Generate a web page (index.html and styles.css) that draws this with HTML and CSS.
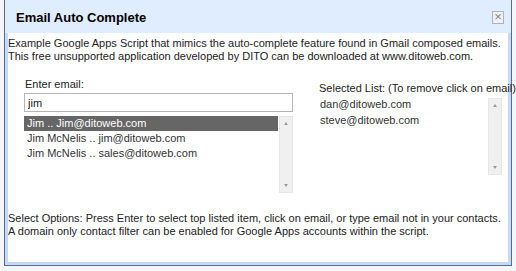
FILE: index.html
```html
<!DOCTYPE html>
<html lang="en">
<head>
  <meta charset="UTF-8" />
  <title>Email Auto Complete</title>
  <link rel="stylesheet" href="styles.css">
</head>
<body>
  <div class="dialog">
    <div class="dialog-header">
      <div class="dialog-title">Email Auto Complete</div>
      <div class="close-btn">&#215;</div>
    </div>
    <div class="dialog-body">
      <p class="intro">Example Google Apps Script that mimics the auto-complete feature found in Gmail composed emails.<br>This free unsupported application developed by DITO can be downloaded at www.ditoweb.com.</p>

      <div class="columns">
        <div class="col-left">
          <div class="label">Enter email:</div>
          <input class="email-input" type="text" value="jim" />
          <div class="listbox listbox-left">
            <div class="list-items">
              <div class="item selected">Jim .. Jim@ditoweb.com</div>
              <div class="item">Jim McNelis .. jim@ditoweb.com</div>
              <div class="item">Jim McNelis .. sales@ditoweb.com</div>
            </div>
            <div class="scrollbar">
              <span class="arrow up"></span>
              <span class="arrow down"></span>
            </div>
          </div>
        </div>

        <div class="col-right">
          <div class="label">Selected List: (To remove click on email)</div>
          <div class="listbox listbox-right">
            <div class="list-items">
              <div class="item">dan@ditoweb.com</div>
              <div class="item">steve@ditoweb.com</div>
            </div>
            <div class="scrollbar">
              <span class="arrow up"></span>
              <span class="arrow down"></span>
            </div>
          </div>
        </div>
      </div>

      <p class="options">Select Options: Press Enter to select top listed item, click on email, or type email not in your contacts.<br>A domain only contact filter can be enabled for Google Apps accounts within the script.</p>
    </div>
  </div>
</body>
</html>
```

FILE: styles.css
```css
body {
  margin: 0;
  font-family: 'Liberation Sans', Arial, sans-serif;
  font-size: 11px;
  color: #222;
  background: #f4f6f9;
}
.dialog {
  margin-left: 4px;
  width: 500px;
  height: 262px;
  padding: 0 3px 3px;
  background: #c3d9ff;
  border: 1px solid #5b6b80;
  border-top: none;
}
.dialog-header {
  display: flex;
  justify-content: space-between;
  align-items: center;
  height: 33px;
  margin: 0 -3px;
  padding: 0 7px 0 10px;
  background: #e0ecff;
}
.dialog-title {
  font-weight: 700;
  font-size: 13px;
  color: #000;
  margin-left: 1px;
  margin-top: 1px;
}
.close-btn {
  width: 10px;
  height: 11px;
  border: 1px solid #b2b2b2;
  background: #eef2f8;
  color: #888;
  font-size: 13px;
  line-height: 10px;
  text-align: center;
  margin-top: 2px;
}
.dialog-body {
  height: 229px;
  background: #fff;
  padding-top: 4px;
  box-sizing: border-box;
}
.intro, .options {
  margin: 0;
  line-height: 13px;
}
.columns {
  display: flex;
  margin-top: 15px;
}
.col-left {
  width: 269px;
  margin-left: 16px;
}
.col-right {
  width: 184px;
  margin-left: 25px;
  padding-top: 4px;
}
.label {
  line-height: 13px;
  padding-left: 1px;
  white-space: nowrap;
}
.email-input {
  display: block;
  box-sizing: border-box;
  width: 269px;
  height: 19px;
  margin: 2px 0 0;
  padding: 0 3px;
  border: 1px solid #b4b4b4;
  font-family: inherit;
  font-size: 11px;
  color: #222;
  outline: none;
}
.listbox {
  display: flex;
  margin-top: 4px;
}
.listbox-left {
  height: 77px;
}
.listbox-right {
  height: 77px;
  margin-top: 3px;
}
.list-items {
  flex: 1;
}
.item {
  line-height: 15px;
  padding-left: 3px;
  color: #333;
}
.listbox-right .item {
  line-height: 13px;
  margin-bottom: 3px;
  padding-left: 2px;
}
.item.selected {
  background: #666;
  color: #fff;
}
.scrollbar {
  position: relative;
  width: 14px;
  margin-left: 1px;
  background: #f0f0f0;
  border: 1px solid #e6e6e6;
  box-sizing: border-box;
}
.arrow {
  position: absolute;
  left: 4px;
  width: 0;
  height: 0;
  border-left: 2px solid transparent;
  border-right: 2px solid transparent;
}
.arrow.up {
  top: 5px;
  border-bottom: 3px solid #999;
}
.arrow.down {
  bottom: 5px;
  border-top: 3px solid #999;
}
.options {
  margin-top: 19px;
}
```
